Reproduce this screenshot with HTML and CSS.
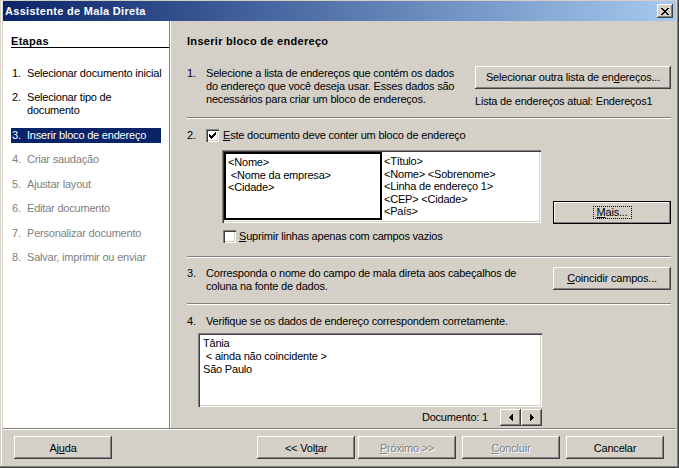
FILE: index.html
```html
<!DOCTYPE html>
<html lang="pt-BR">
<head>
<meta charset="utf-8">
<title>Assistente de Mala Direta</title>
<link rel="stylesheet" href="styles.css">
</head>
<body>
<div class="window">
  <div class="titlebar">
    <span class="title">Assistente de Mala Direta</span>
    <span class="caption-btn"><svg width="8" height="7" viewBox="0 0 8 7" shape-rendering="crispEdges"><path d="M0 0h2v1H0z M6 0h2v1H6z M1 1h2v1H1z M5 1h2v1H5z M2 2h4v1H2z M3 3h2v1H3z M2 4h4v1H2z M1 5h2v1H1z M5 5h2v1H5z M0 6h2v1H0z M6 6h2v1H6z" fill="#000"/></svg></span>
  </div>
  <div class="main">
    <div class="steps">
      <div class="steps-title">Etapas</div>
      <ol class="step-list">
        <li><span class="num">1.</span><span>Selecionar documento inicial</span></li>
        <li><span class="num">2.</span><span>Selecionar tipo de<br>documento</span></li>
        <li class="active"><span class="num">3.</span><span>Inserir bloco de endereço</span></li>
        <li class="off"><span class="num">4.</span><span>Criar saudação</span></li>
        <li class="off"><span class="num">5.</span><span>Ajustar layout</span></li>
        <li class="off"><span class="num">6.</span><span>Editar documento</span></li>
        <li class="off"><span class="num">7.</span><span>Personalizar documento</span></li>
        <li class="off"><span class="num">8.</span><span>Salvar, imprimir ou enviar</span></li>
      </ol>
    </div>
    <div class="content">
      <div class="heading">Inserir bloco de endereço</div>

      <div class="section s1">
        <div class="step-text"><span class="n">1.</span><span class="t">Selecione a lista de endereços que contém os dados<br>do endereço que você deseja usar. Esses dados são<br>necessários para criar um bloco de endereços.</span></div>
        <div class="side">
          <button class="btn list-btn">Selecionar outra lista de en<u>d</u>ereços...</button>
          <div class="note">Lista de endereços atual: Endereços1</div>
        </div>
      </div>
      <div class="sep"></div>

      <div class="section s2">
        <div class="check-row"><span class="n">2.</span><span class="cb"><svg width="7" height="7" viewBox="0 0 7 7" shape-rendering="crispEdges"><path d="M6 0h1v1H6z M5 1h2v1H5z M0 2h1v1H0z M4 2h3v1H4z M0 3h2v1H0z M3 3h3v1H3z M0 4h5v1H0z M1 5h3v1H1z M2 6h1v1H2z" fill="#000"/></svg></span><span><u>E</u>ste documento deve conter um bloco de endereço</span></div>
        <div class="block-row">
          <div class="addr-box">
            <div class="addr-sel">&lt;Nome&gt;
 &lt;Nome da empresa&gt;
&lt;Cidade&gt;</div>
            <div class="addr-next">&lt;Título&gt;
&lt;Nome&gt; &lt;Sobrenome&gt;
&lt;Linha de endereço 1&gt;
&lt;CEP&gt; &lt;Cidade&gt;
&lt;País&gt;</div>
          </div>
          <button class="btn focused side-btn mais"><span class="focus-rect"><u>M</u>ais...</span></button>
        </div>
        <div class="check-row sub"><span class="cb"></span><span><u>S</u>uprimir linhas apenas com campos vazios</span></div>
      </div>
      <div class="sep"></div>

      <div class="section s3">
        <div class="step-text"><span class="n">3.</span><span class="t">Corresponda o nome do campo de mala direta aos cabeçalhos de<br>coluna na fonte de dados.</span></div>
        <button class="btn side-btn"><u>C</u>oincidir campos...</button>
      </div>
      <div class="sep"></div>

      <div class="section s4">
        <div class="step-text"><span class="n">4.</span><span class="t">Verifique se os dados de endereço correspondem corretamente.</span></div>
        <div class="preview">Tânia
 &lt; ainda não coincidente &gt;
São Paulo</div>
        <div class="doc-nav">
          <span class="doc-label">Documento: 1</span>
          <button class="btn nav"><svg width="4" height="7" viewBox="0 0 4 7" shape-rendering="crispEdges"><path d="M3 0h1v7H3z M2 1h1v5H2z M1 2h1v3H1z M0 3h1v1H0z" fill="#000"/></svg></button>
          <button class="btn nav"><svg width="4" height="7" viewBox="0 0 4 7" shape-rendering="crispEdges"><path d="M0 0h1v7H0z M1 1h1v5H1z M2 2h1v3H2z M3 3h1v1H3z" fill="#000"/></svg></button>
        </div>
      </div>
    </div>
  </div>
  <div class="footer">
    <button class="btn fbtn">Aj<u>u</u>da</button>
    <button class="btn fbtn back">&lt;&lt; Vol<u>t</u>ar</button>
    <button class="btn fbtn next disabled"><u>P</u>róximo &gt;&gt;</button>
    <button class="btn fbtn gap6 disabled"><u>C</u>oncluir</button>
    <button class="btn fbtn gap6">Cancelar</button>
  </div>
</div>
</body>
</html>
```
FILE: styles.css
```css
* { box-sizing: border-box; }
html, body { margin: 0; padding: 0; }
body {
  width: 679px;
  height: 468px;
  overflow: hidden;
  background: #d4d0c8;
  font-family: "Liberation Sans", Arial, sans-serif;
  font-size: 11px;
  letter-spacing: -0.2px;
  color: #000;
}
u { text-decoration: underline; text-underline-offset: 1px; }

.window {
  width: 679px;
  height: 468px;
  background: #d4d0c8;
  padding: 1px 3px 3px 3px;
  display: flex;
  flex-direction: column;
  box-shadow: inset -1px -1px #404040, inset -2px -2px #808080, inset 1px 1px #d4d0c8, inset 2px 2px #fff;
}

.titlebar {
  height: 20px;
  flex: none;
  display: flex;
  align-items: center;
  justify-content: space-between;
  padding: 0 3px 0 2px;
  background: linear-gradient(to right, #0a246a, #a6caf0);
}
.title {
  color: #fff;
  font-weight: bold;
  font-size: 11px;
  line-height: 13px;
  letter-spacing: 0.3px;
}
.caption-btn {
  width: 16px;
  height: 14px;
  display: flex;
  align-items: center;
  justify-content: center;
  background: #d4d0c8;
  box-shadow: inset -1px -1px #404040, inset 1px 1px #fff, inset -2px -2px #808080, inset 2px 2px #d4d0c8;
}

.main {
  height: 407px;
  flex: none;
  display: flex;
}

.steps {
  width: 167px;
  flex: none;
  background: #fff;
  border-right: 1px solid #808080;
  padding: 15px 0 0 8px;
}
.steps-title {
  font-weight: bold;
  height: 12px;
  line-height: 11px;
  letter-spacing: 0.3px;
  border-bottom: 1px solid #000;
}
.step-list {
  list-style: none;
  margin: 17.5px 0 0 0;
  padding: 0;
  display: flex;
  flex-direction: column;
  gap: 9.5px;
}
.step-list li {
  display: flex;
  width: 150px;
  line-height: 13px;
  padding: 1px 0;
  white-space: nowrap;
}
.step-list .num { width: 16px; flex: none; padding-left: 1px; }
.step-list li.active { background: #0a246a; color: #fff; }
.step-list li.off { color: #808080; }

.content {
  flex: 1;
  border-left: 1px solid #fff;
  padding: 15px 5px 0 16px;
  line-height: 13px;
}
.heading {
  font-weight: bold;
  line-height: 11px;
  height: 11px;
  letter-spacing: 0.3px;
}

.step-text { display: flex; white-space: nowrap; }
.step-text .n, .check-row .n { width: 19px; flex: none; }

.section { display: flex; }
.s1 { margin-top: 19px; align-items: flex-start; }
.s1 .step-text { padding-top: 0.5px; }
.side { margin-left: auto; width: 196px; }
.note { margin-top: 6px; white-space: nowrap; }

.sep {
  height: 2px;
  border-top: 1px solid #808080;
  border-bottom: 1px solid #fff;
}
.s1 + .sep { margin-top: 9px; }

.s2 { flex-direction: column; margin-top: 10px; }
.check-row { display: flex; align-items: center; height: 13px; white-space: nowrap; }
.cb {
  width: 13px;
  height: 13px;
  flex: none;
  background: #fff;
  box-shadow: inset 1px 1px #808080, inset 2px 2px #404040, inset -1px -1px #fff, inset -2px -2px #d4d0c8;
  padding: 3px;
  display: flex;
  margin-right: 4px;
}
.block-row {
  display: flex;
  align-items: flex-end;
  margin: 8px 0 0 35px;
  gap: 12px;
}
.addr-box {
  width: 319px;
  height: 73px;
  background: #fff;
  box-shadow: inset 1px 1px #808080, inset 2px 2px #404040, inset -1px -1px #fff, inset -2px -2px #d4d0c8;
  padding: 2px;
  display: flex;
  line-height: 12.5px;
  white-space: pre;
}
.addr-sel {
  width: 158px;
  height: 68px;
  border: 2px solid #000;
  padding: 2px 0 0 2px;
  flex: none;
}
.addr-next { padding: 3px 0 0 2px; }

.btn {
  font: inherit;
  letter-spacing: inherit;
  color: #000;
  background: #d4d0c8;
  border: 0;
  margin: 0;
  padding: 0;
  height: 23px;
  display: flex;
  align-items: center;
  justify-content: center;
  white-space: nowrap;
  box-shadow: inset -1px -1px #404040, inset 1px 1px #fff, inset -2px -2px #808080, inset 2px 2px #d4d0c8;
}
.btn.focused {
  box-shadow: inset 0 0 0 1px #000, inset -2px -2px #808080, inset 2px 2px #fff;
}
.focus-rect {
  border: 1px dotted #000;
  padding: 0 3px;
  line-height: 11px;
}
.btn.disabled { color: #808080; text-shadow: 1px 1px #fff; }
.list-btn { width: 196px; }
.side-btn { width: 118px; flex: none; }
.mais { margin-bottom: -1px; }

.check-row.sub { margin: 7px 0 0 36px; }
.check-row.sub .cb { margin-right: 3px; }
.s2 + .sep { margin-top: 13px; }

.s3 { margin-top: 9px; justify-content: space-between; align-items: flex-start; }
.s3 + .sep { margin-top: 10px; }

.s4 { flex-direction: column; margin-top: 10px; }
.preview {
  margin: 5px 0 0 11px;
  width: 344px;
  height: 74px;
  background: #fff;
  box-shadow: inset 1px 1px #808080, inset 2px 2px #404040, inset -1px -1px #fff, inset -2px -2px #d4d0c8;
  padding: 4px 0 0 5px;
  white-space: pre;
  line-height: 13px;
}
.doc-nav {
  margin: 2px 0 0 11px;
  width: 344px;
  display: flex;
  justify-content: flex-end;
  align-items: center;
}
.doc-label { margin-right: 12px; }
.btn.nav { width: 21px; height: 17px; }

.footer {
  height: 37px;
  flex: none;
  border-top: 1px solid #808080;
  box-shadow: inset 0 1px #fff;
  display: flex;
  align-items: flex-start;
  padding: 7px 12px 0 11px;
}
.fbtn { width: 98px; }
.fbtn.back { margin-left: auto; }
.fbtn.next { margin-left: 3px; }
.fbtn.gap6 { margin-left: 6px; }
```
